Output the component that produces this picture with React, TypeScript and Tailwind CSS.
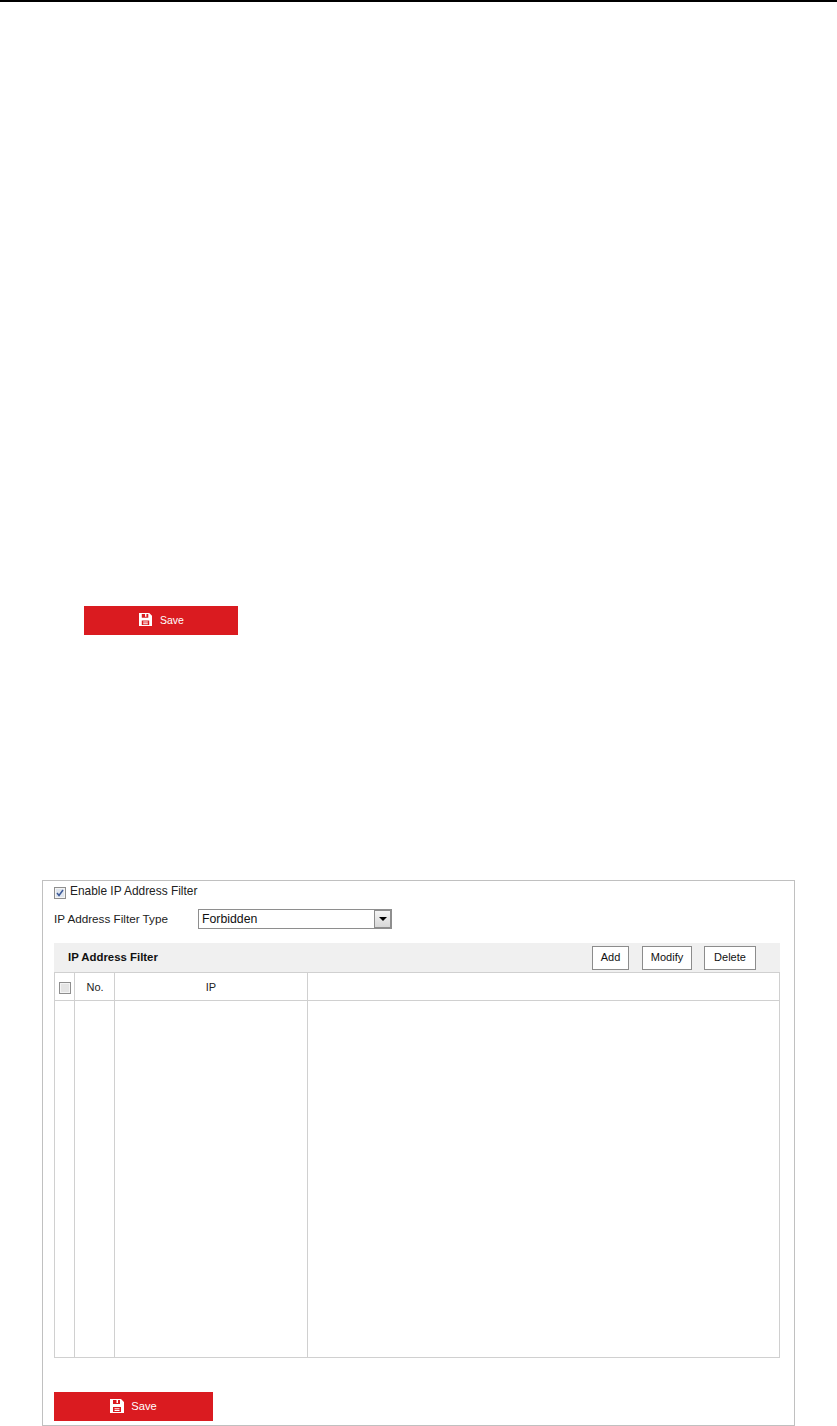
const font = "font-['Liberation_Sans',Arial,sans-serif]";

const SaveIcon = ({ size }: { size: number }) => (
  <svg width={size} height={size} viewBox="0 0 14 14" fill="none" className="mb-[2px]">
    <path fillRule="evenodd" clipRule="evenodd" fill="#fff" d="M0 0H11L14 3V14H0ZM3 1V5H10V1H8V4H6.5V1ZM3 8V13H11V8Z" />
    <path fill="#fff" d="M4.5 9.2H9.5V10.2H4.5ZM4.5 11H9.5V12H4.5Z" />
  </svg>
);

const SaveButton = ({ className, iconSize, text }: { className: string; iconSize: number; text: string }) => (
  <button className={`flex items-center justify-center bg-[#da1b20] text-white ${className}`}>
    <SaveIcon size={iconSize} />
    <span className={text}>Save</span>
  </button>
);

const SmallButton = ({ label, className }: { label: string; className: string }) => (
  <button className={`h-6 border border-[#8c8c8c] bg-white text-[11px] text-[#111] ${className}`}>{label}</button>
);

export default function App() {
  return (
    <div className={`min-h-[1426px] bg-white ${font} text-[12px] text-[#222]`}>
      <div className="h-[2px] bg-black" />

      <SaveButton className="mt-[604px] ml-[84px] h-[29px] w-[154px] gap-[8px] pl-[1px]" iconSize={13} text="text-[10.5px]" />

      <div className="mt-[245px] ml-[42px] h-[546px] w-[753px] border border-[#c0c0c0] pl-[11px]">
        <label className="mt-[4px] flex h-[12px] items-start">
          <span className="mt-[2px] flex h-[12px] w-[12px] shrink-0 items-center justify-center border border-[#8e8e8e] bg-[#dfe5ee] shadow-[inset_0_0_0_1px_#f4f4f4]">
            <svg width="8" height="8" viewBox="0 0 8 8" fill="none">
              <path d="M1 4L3 6.5L7 1" stroke="#3d5a98" strokeWidth="1.5" />
            </svg>
          </span>
          <span className="ml-[4px] text-[11.9px] leading-[12px]">Enable IP Address Filter</span>
        </label>

        <div className="mt-[12px] flex h-[20px] items-center">
          <span className="w-[144px] text-[11.7px]">IP Address Filter Type</span>
          <div className="flex h-[20px] w-[194px] items-center justify-between border border-[#8e8e8e] pl-[3px] text-[12.3px] text-[#111]">
            <span>Forbidden</span>
            <span className="flex h-[18px] w-[17px] items-center justify-center border border-[#8e8e8e] bg-linear-to-b from-[#f4f4f4] to-[#d8d8d8]">
              <span className="h-0 w-0 border-x-[4px] border-t-[4px] border-x-transparent border-t-black" />
            </span>
          </div>
        </div>

        <div className="mt-[14px] w-[726px]">
          <div className="flex h-[29px] items-center justify-between bg-[#f0f0f0] pr-[24px] pl-[14px]">
            <span className="text-[11.4px] font-bold text-[#111]">IP Address Filter</span>
            <div className="flex">
              <SmallButton label="Add" className="w-[37px]" />
              <SmallButton label="Modify" className="ml-[13px] w-[50px]" />
              <SmallButton label="Delete" className="ml-[12px] w-[52px]" />
            </div>
          </div>
          <div className="h-[386px] border border-[#d0d0d0]">
            <div className="flex h-[28px] border-b border-[#d0d0d0] text-[11px]">
              <div className="flex w-[20px] items-center justify-center border-r border-[#d0d0d0] pt-[3px]">
                <span className="h-[12px] w-[12px] border border-[#8e8e8e] bg-[#e4e4e4] shadow-[inset_0_0_0_1px_#f4f4f4]" />
              </div>
              <div className="flex w-[40px] items-center justify-center border-r border-[#d0d0d0] pt-[1px] pl-[1px]">No.</div>
              <div className="flex w-[193px] items-center justify-center border-r border-[#d0d0d0] pt-[1px]">IP</div>
            </div>
            <div className="flex h-[357px]">
              <div className="w-[20px] border-r border-[#d0d0d0]" />
              <div className="w-[40px] border-r border-[#d0d0d0]" />
              <div className="w-[193px] border-r border-[#d0d0d0]" />
            </div>
          </div>
        </div>

        <SaveButton className="mt-[34px] h-[29px] w-[159px] gap-[7px]" iconSize={14} text="text-[11.2px]" />
      </div>
    </div>
  );
}
